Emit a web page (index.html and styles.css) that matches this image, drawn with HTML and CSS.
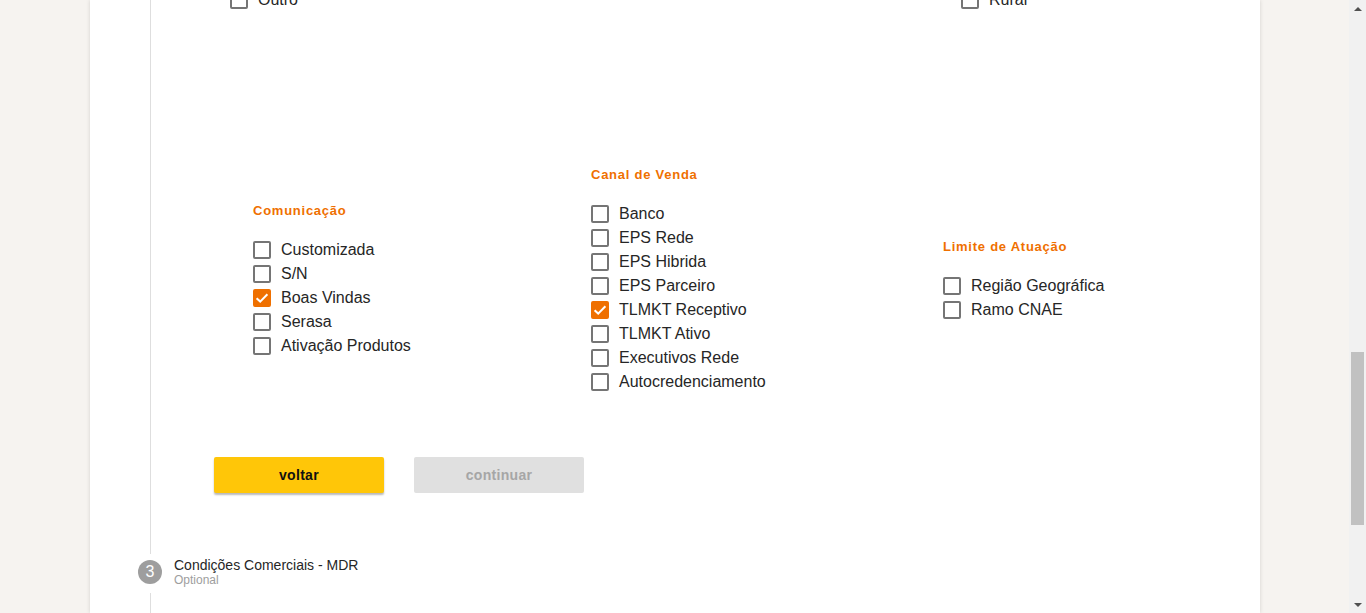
FILE: index.html
```html
<!DOCTYPE html>
<html lang="pt">
<head>
<meta charset="utf-8">
<title>Cadastro</title>
<link rel="stylesheet" href="styles.css">
</head>
<body>
<div class="window">
  <div class="viewport">
    <div class="card">
      <div class="step-body step-body--current">
        <div class="prev-row">
          <label class="cb cb--wide"><span class="box"></span><span class="lbl">Outro</span></label>
          <label class="cb"><span class="box"></span><span class="lbl">Rural</span></label>
        </div>

        <div class="groups">
          <div class="group group--c1">
            <h3 class="group-title">Comunicação</h3>
            <div class="list">
              <label class="cb"><span class="box"></span><span class="lbl">Customizada</span></label>
              <label class="cb"><span class="box"></span><span class="lbl">S/N</span></label>
              <label class="cb cb--checked"><span class="box"><svg viewBox="0 0 18 18" class="tick"><path d="M3.6 9.2 L7.2 12.6 L14.4 5.2" /></svg></span><span class="lbl">Boas Vindas</span></label>
              <label class="cb"><span class="box"></span><span class="lbl">Serasa</span></label>
              <label class="cb"><span class="box"></span><span class="lbl">Ativação Produtos</span></label>
            </div>
          </div>
          <div class="group group--c2">
            <h3 class="group-title">Canal de Venda</h3>
            <div class="list">
              <label class="cb"><span class="box"></span><span class="lbl">Banco</span></label>
              <label class="cb"><span class="box"></span><span class="lbl">EPS Rede</span></label>
              <label class="cb"><span class="box"></span><span class="lbl">EPS Hibrida</span></label>
              <label class="cb"><span class="box"></span><span class="lbl">EPS Parceiro</span></label>
              <label class="cb cb--checked"><span class="box"><svg viewBox="0 0 18 18" class="tick"><path d="M3.6 9.2 L7.2 12.6 L14.4 5.2" /></svg></span><span class="lbl">TLMKT Receptivo</span></label>
              <label class="cb"><span class="box"></span><span class="lbl">TLMKT Ativo</span></label>
              <label class="cb"><span class="box"></span><span class="lbl">Executivos Rede</span></label>
              <label class="cb"><span class="box"></span><span class="lbl">Autocredenciamento</span></label>
            </div>
          </div>
          <div class="group group--c3">
            <h3 class="group-title">Limite de Atuação</h3>
            <div class="list">
              <label class="cb"><span class="box"></span><span class="lbl">Região Geográfica</span></label>
              <label class="cb"><span class="box"></span><span class="lbl">Ramo CNAE</span></label>
            </div>
          </div>
        </div>

        <div class="actions">
          <button class="btn btn--primary" type="button">voltar</button>
          <button class="btn btn--disabled" type="button" disabled>continuar</button>
        </div>
      </div>

      <div class="step-head">
        <span class="step-num">3</span>
        <div class="step-labels">
          <span class="step-title">Condições Comerciais - MDR</span>
          <span class="step-sub">Optional</span>
        </div>
      </div>

      <div class="step-body step-body--next"></div>
    </div>
  </div>
  <div class="scrollbar">
    <div class="sb-arrow sb-arrow--up"></div>
    <div class="sb-track">
      <div class="sb-thumb"></div>
    </div>
    <div class="sb-arrow sb-arrow--down"></div>
  </div>
</div>
</body>
</html>
```

FILE: styles.css
```css
* { box-sizing: border-box; }

html, body {
  margin: 0;
  padding: 0;
  height: 100%;
  overflow: hidden;
}

body {
  font-family: "Liberation Sans", Arial, sans-serif;
  color: #262626;
  background: #f6f3f0;
}

.window {
  display: flex;
  width: 1366px;
  height: 613px;
}

.viewport {
  flex: 1;
  height: 613px;
  overflow: hidden;
  background: #f6f3f0;
}

.card {
  margin-left: 90px;
  width: 1170px;
  height: 613px;
  background: #ffffff;
  box-shadow: 0 0 4px rgba(0, 0, 0, 0.14);
  display: flex;
  flex-direction: column;
}

.step-body {
  margin-left: 60px;
  border-left: 1px solid #dedede;
}

.step-body--current {
  padding-bottom: 61px;
}

.step-body--next {
  flex: 1;
}

/* previous section row */
.prev-row {
  display: flex;
  margin-top: -12px;
  padding-left: 79px;
}

.cb {
  display: flex;
  align-items: center;
  gap: 10px;
  height: 24px;
  font-size: 16px;
  color: #262626;
  cursor: pointer;
}

.cb--wide {
  width: 731px;
}

.box {
  width: 18px;
  height: 18px;
  border: 2px solid #757575;
  border-radius: 2px;
  flex: none;
  display: flex;
  align-items: center;
  justify-content: center;
}

.cb--checked .box {
  background: #ef7000;
  border-color: #ef7000;
}

.tick {
  width: 18px;
  height: 18px;
  flex: none;
}

.tick path {
  fill: none;
  stroke: #ffffff;
  stroke-width: 2;
}

/* groups */
.groups {
  display: grid;
  grid-template-columns: 338px 352px 300px;
  align-items: center;
  margin-top: 154px;
  padding-left: 102px;
}

.group-title {
  margin: 0 0 19px 0;
  height: 17px;
  line-height: 17px;
  font-size: 13px;
  font-weight: bold;
  letter-spacing: 0.75px;
  color: #ef7000;
}

.list {
  display: flex;
  flex-direction: column;
}

/* buttons */
.actions {
  display: flex;
  gap: 30px;
  margin-top: 63px;
  margin-left: 63px;
}

.btn {
  width: 170px;
  height: 36px;
  border: none;
  border-radius: 2px;
  font-family: "Liberation Sans", Arial, sans-serif;
  font-size: 14px;
  font-weight: bold;
  letter-spacing: 0.3px;
}

.btn--primary {
  background: #ffc608;
  color: #111111;
  box-shadow: 0 2px 2px rgba(0, 0, 0, 0.28);
}

.btn--disabled {
  background: #e0e0e0;
  color: #a6a6a6;
}

/* step header */
.step-head {
  display: flex;
  align-items: flex-start;
  gap: 12px;
  height: 39px;
  padding-left: 48px;
  padding-top: 6px;
}

.step-num {
  width: 24px;
  height: 24px;
  border-radius: 50%;
  background: #9e9e9e;
  color: #ffffff;
  font-size: 16px;
  line-height: 24px;
  text-align: center;
  flex: none;
}

.step-labels {
  display: flex;
  flex-direction: column;
  margin-top: -3px;
}

.step-title {
  font-size: 14px;
  line-height: 16px;
  color: #262626;
}

.step-sub {
  font-size: 12px;
  line-height: 15px;
  color: #9e9e9e;
}

/* scrollbar */
.scrollbar {
  width: 17px;
  height: 613px;
  background: #f1f1f1;
  display: flex;
  flex-direction: column;
}

.sb-arrow {
  height: 17px;
  flex: none;
  display: flex;
  align-items: center;
  justify-content: center;
}

.sb-arrow::before {
  content: "";
  width: 0;
  height: 0;
  border-left: 4px solid transparent;
  border-right: 4px solid transparent;
}

.sb-arrow--up::before {
  border-bottom: 4px solid #505050;
}

.sb-arrow--down::before {
  border-top: 4px solid #505050;
}

.sb-track {
  flex: 1;
  padding: 0 2px;
}

.sb-thumb {
  margin-top: 335px;
  height: 173px;
  background: #c1c1c1;
}
```
